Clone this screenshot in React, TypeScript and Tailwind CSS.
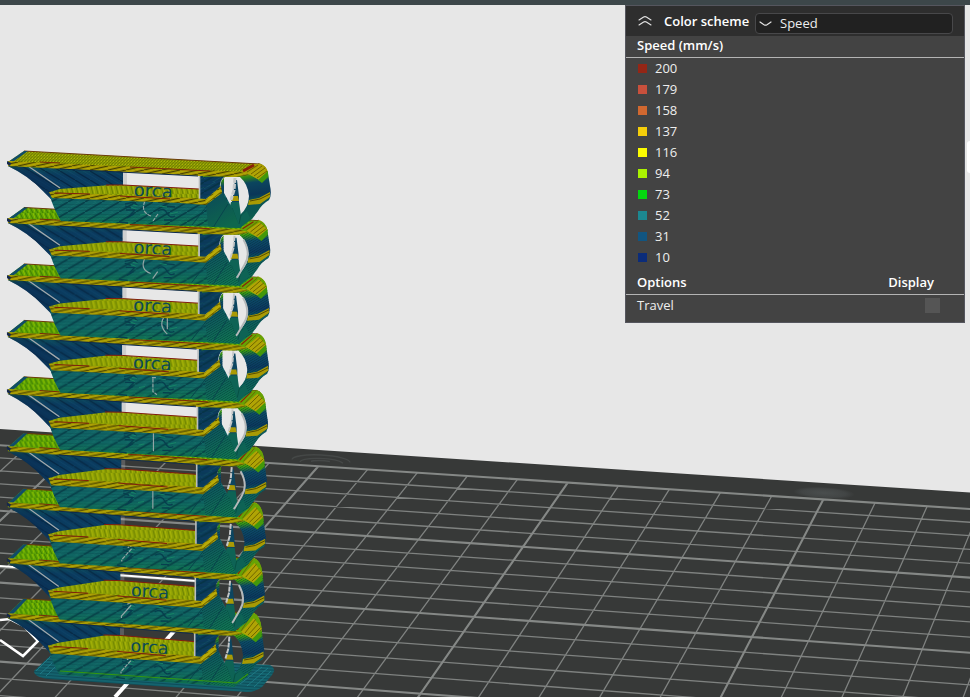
import { useState } from 'react';

interface SpeedStep {
  value: number;
  color: string;
}

interface BoatLayer {
  y: number;
  scale: number;
  lettering: boolean;
  marks: string;
  arc: boolean;
}

const speedSteps: SpeedStep[] = [
  { value: 200, color: 'bg-[#942616]' },
  { value: 179, color: 'bg-[#c8503c]' },
  { value: 158, color: 'bg-[#d16830]' },
  { value: 137, color: 'bg-[#f5ce0a]' },
  { value: 116, color: 'bg-[#fcfc00]' },
  { value: 94, color: 'bg-[#aaf200]' },
  { value: 73, color: 'bg-[#04d60f]' },
  { value: 52, color: 'bg-[#1c8891]' },
  { value: 31, color: 'bg-[#115581]' },
  { value: 10, color: 'bg-[#0b2c7a]' },
];

const hookMark = 'M145 39 Q140 50 151 54 M158 52 L153 59';
const bracketMark = 'M153 43 h5 M154 44 V57 l4 3';
const seamMark = 'M155 41 V59';
const slashMark = 'M136 39 L130 42 M134 43 L124 54 V56';

const layers: BoatLayer[] = [
  { y: 162, scale: 1, lettering: true, marks: hookMark, arc: false },
  { y: 219, scale: 0.998, lettering: true, marks: hookMark, arc: true },
  { y: 276, scale: 0.996, lettering: true, marks: 'M166 38 Q158 48 168 57 M168 36 V52', arc: true },
  { y: 333, scale: 0.993, lettering: true, marks: bracketMark, arc: false },
  { y: 390, scale: 0.99, lettering: false, marks: seamMark, arc: true },
  { y: 447, scale: 0.986, lettering: false, marks: seamMark, arc: true },
  { y: 503, scale: 0.982, lettering: false, marks: slashMark, arc: false },
  { y: 559, scale: 0.979, lettering: true, marks: slashMark, arc: true },
  { y: 614, scale: 0.976, lettering: true, marks: slashMark, arc: false },
];

// plate grid coordinates -> view coordinates, one unit = 10 cells
function project(u: number, v: number) {
  const w = 1 - 0.02338 * u - 0.08268 * v;
  const x = (485.75 * u - 131.81 * v + 318.3) / w;
  const y = (21.52 * u + 81.72 * v + 466.2) / w;
  return `${x.toFixed(1)},${y.toFixed(1)}`;
}

function gridLines(major: boolean) {
  const parts: string[] = [];
  for (let i = -10; i <= 18; i++) {
    if ((i % 5 === 0) !== major) continue;
    parts.push(`M${project(i / 10, 0)}L${project(i / 10, 2.4)}`);
  }
  for (let j = 0; j <= 24; j++) {
    if ((j % 5 === 0) !== major) continue;
    parts.push(`M${project(-1, j / 10)}L${project(1.8, j / 10)}`);
  }
  return parts.join('');
}

function Defs() {
  return (
    <defs>
      <pattern id="roofGrain" width="3" height="3" patternUnits="userSpaceOnUse">
        <rect width="3" height="3" fill="#8c9a04" />
        <path d="M0 3 L3 0" stroke="#6f7c00" strokeWidth="0.8" />
        <path d="M2 2.5 h1" stroke="#b0bb05" strokeWidth="0.8" />
      </pattern>
      <pattern id="greenGrain" width="5" height="6" patternUnits="userSpaceOnUse">
        <rect width="5" height="6" fill="#5fa603" />
        <path d="M0 0 L3 6" stroke="#3c7802" strokeWidth="1" />
        <path d="M3 0 L5 5" stroke="#91c000" strokeWidth="1" />
      </pattern>
      <pattern id="deckGrain" width="5" height="8" patternUnits="userSpaceOnUse">
        <rect width="5" height="8" fill="#8fa004" />
        <path d="M1 0 L3 8" stroke="#6c8200" strokeWidth="1" />
        <path d="M3 0 L5 8" stroke="#a9b607" strokeWidth="1" />
      </pattern>
      <pattern id="lipGrain" width="18" height="4" patternUnits="userSpaceOnUse">
        <rect width="18" height="4" fill="#9d9103" />
        <path d="M0 4 L18 0" stroke="#453f00" strokeWidth="1" />
        <path d="M0 2 L9 0 M9 4 L18 2" stroke="#beb004" strokeWidth="0.8" />
      </pattern>
      <pattern id="hullGrain" width="17" height="10" patternUnits="userSpaceOnUse">
        <path d="M-2 11.2 L19 -1.2" stroke="#032e3c" strokeOpacity="0.65" strokeWidth="1.7" />
        <path d="M-2 8 L12 -0.5 M8 10.5 L19 4" stroke="#22867a" strokeOpacity="0.3" strokeWidth="0.8" />
        <path d="M0 2.5 H17 M0 5.5 H17 M0 8.5 H17" stroke="#043b44" strokeOpacity="0.3" strokeWidth="0.8" />
      </pattern>
      <pattern id="cabinGrain" width="15" height="9" patternUnits="userSpaceOnUse">
        <path d="M0 0 L15 9" stroke="#041b33" strokeOpacity="0.6" strokeWidth="1.4" />
        <path d="M0 4 L8 9 M8 0 L15 4" stroke="#17658a" strokeOpacity="0.25" strokeWidth="0.8" />
      </pattern>
      <pattern id="fineGrain" width="2" height="2" patternUnits="userSpaceOnUse" patternTransform="rotate(-32)">
        <path d="M0 1 H2" stroke="#042c38" strokeOpacity="0.5" strokeWidth="0.8" />
      </pattern>
      <pattern id="brimGrain" width="3" height="3" patternUnits="userSpaceOnUse" patternTransform="rotate(4)">
        <rect width="3" height="3" fill="#14636e" />
        <path d="M0 1.5 H3" stroke="#0e4d59" strokeWidth="1" />
      </pattern>
      <linearGradient id="wingFill" x1="0" y1="0" x2="0" y2="1">
        <stop offset="0" stopColor="#36800f" />
        <stop offset="0.12" stopColor="#0c4a5a" />
        <stop offset="0.3" stopColor="#0a3a5e" />
        <stop offset="0.85" stopColor="#0b4062" />
        <stop offset="1" stopColor="#0e6560" />
      </linearGradient>
      <linearGradient id="hullFill" x1="0" y1="0" x2="0" y2="1">
        <stop offset="0" stopColor="#126068" />
        <stop offset="0.6" stopColor="#0f6562" />
        <stop offset="1" stopColor="#10754c" />
      </linearGradient>
      <linearGradient id="facetFill" x1="0" y1="0" x2="0.5" y2="1">
        <stop offset="0" stopColor="#0d4d63" />
        <stop offset="1" stopColor="#107552" />
      </linearGradient>
      <linearGradient id="handleFill" gradientUnits="userSpaceOnUse" x1="238" y1="4" x2="246" y2="64">
        <stop offset="0" stopColor="#aaa202" />
        <stop offset="0.13" stopColor="#b5a905" />
        <stop offset="0.2" stopColor="#3ba10b" />
        <stop offset="0.3" stopColor="#0d4c68" />
        <stop offset="0.5" stopColor="#0b3860" />
        <stop offset="0.6" stopColor="#0d5c60" />
        <stop offset="0.85" stopColor="#0d6656" />
        <stop offset="1" stopColor="#158746" />
      </linearGradient>
      <radialGradient id="plateMark">
        <stop offset="0" stopColor="#4a4e4e" />
        <stop offset="0.7" stopColor="#424545" />
        <stop offset="1" stopColor="#373938" />
      </radialGradient>
    </defs>
  );
}

function BuildPlate() {
  return (
    <g fill="none">
      <path d="M0 429 L970 492.5 V697 H0 Z" fill="#373938" />
      <ellipse cx="824" cy="493" rx="31" ry="6" fill="url(#plateMark)" transform="rotate(3 824 493)" />
      <g stroke="#454847" strokeWidth="1.4" transform="rotate(3 321 461)">
        <path d="M292 461 A29 6 0 0 1 350 461 M300 463 A22 5 0 0 1 343 462 M311 462 A12 2 0 0 1 330 461" />
      </g>
      <path d={gridLines(false)} stroke="#7f8280" strokeWidth="1.3" />
      <path d={gridLines(true)} stroke="#858886" strokeWidth="2.1" />
      <g stroke="#ffffff" strokeWidth="2.6">
        <path d="M0 566 L197 581" strokeWidth="1.8" />
        <path d="M176 629 L115 697" strokeWidth="4" />
        <path d="M0 620 L10 619 L24 626 L38 641 L23 656 L0 640" />
      </g>
    </g>
  );
}

function Face({ d, fill, grain }: { d: string; fill: string; grain?: string }) {
  return (
    <>
      <path d={d} fill={fill} />
      {grain && <path d={d} fill={grain} />}
    </>
  );
}

function Boat({ layer, index }: { layer: BoatLayer; index: number }) {
  const top = index === 0;
  // lower boats are seen from further above, so flat faces open up
  const depth = index / 8;
  const roofLeft = -11 - 5 * depth;
  const roofRight = 2 - 10 * depth;
  const deckBack = 23 - 5 * depth;
  const handle = `M222 10 H246 L259 ${roofRight - 1} Q266 ${roofRight + 1} 268 ${11 - 4 * depth} L270 24 Q272 33 269 38 Q262 42 258 49 L252 57 L240 66 L224 60 V14 Z M225 15 Q219 19 221 29 Q224 41 231 46 L240 53 Q249 45 249 34 Q248 22 240 15 Z`;

  return (
    <g transform={`matrix(${layer.scale} ${0.028 * depth} 0 1 0 ${layer.y})`}>
      {/* wing and cabin wall */}
      <Face
        d={`M8 2 L123 8 V${deckBack + 2} L60 28 L53 40 L50 36 L43 29 Q29 14 8 4 Z`}
        fill="url(#wingFill)"
        grain="url(#cabinGrain)"
      />
      <path d="M8 2 L8 4 Q29 14 43 29 L52 38 L59 29 L26 5 Z" fill="#092a50" fillOpacity="0.5" />
      <path d="M28 4 L60 26" stroke="#a4aaad" strokeWidth="1.3" />
      <path
        d={`M123 9 H127 V${deckBack + 1} H123 Z`}
        fill="#c7c9ca"
        fillOpacity={layer.y > 430 ? 0.25 : 0.8}
      />

      {/* deck */}
      <path
        d={`M50 30 L60 27 L110 ${deckBack} L123 ${deckBack} L199 ${deckBack + 4} V41 L120 37 Z`}
        fill="url(#deckGrain)"
      />
      <path
        d={`M106 ${deckBack} H123 L199 ${deckBack + 4}`}
        stroke="#821c0d"
        strokeWidth="1"
        fill="none"
      />
      {layer.lettering && (
        <text
          x="153"
          y="35"
          textAnchor="middle"
          transform="rotate(3 153 35)"
          fontFamily="DejaVu Sans, sans-serif"
          fontSize="18"
          fill="#0c4a56"
        >
          orca
        </text>
      )}

      {/* hull */}
      <Face
        d="M50 34 L130 36 L206 42 L223 29 L232 46 L240 66 L61 59 Q54 48 50 34 Z"
        fill="url(#hullFill)"
        grain="url(#hullGrain)"
      />

      {/* handle */}
      <path fillRule="evenodd" d={handle} fill="url(#handleFill)" />
      <path fillRule="evenodd" d={handle} fill="url(#fineGrain)" />
      <path d="M249 38 L259 36 L270 30 V35 L260 42 L248 43 Z" fill="#a89a04" />
      <path d="M250 39 L260 37 L270 32" stroke="#564b00" strokeWidth="1" fill="none" />

      {/* stern column seen through the handle */}
      <path d="M235 18 L233 34 L230 50 L239 58 V34 L237 18 Z" fill="#0c4560" />
      <path d="M232 34 L238 34 L239 39 L231 39 Z" fill="#aa9a05" />
      <path d="M231 40 L239 40 L241 54 L247 49 L250 56 L240 66 L226 60 Z" fill="#0e6355" />
      <path d="M241 53 L239 62 M232 46 L238 62" stroke="#075043" strokeWidth="1" />
      <path
        d="M235 16 L234 28 L231 38"
        stroke="#c4c7c8"
        strokeWidth={top ? 3 : 2}
        strokeDasharray="5 1"
        fill="none"
      />
      {layer.arc && (
        <path d="M244 20 Q252 34 245 45 L238 57 L234 60" stroke="#b5b9ba" strokeWidth="2" fill="none" />
      )}

      {/* side facet */}
      <Face
        d="M206 43 L222 28 L226 38 L233 48 L240 66 L208 64 Z"
        fill="url(#facetFill)"
        grain="url(#fineGrain)"
      />
      <path d="M207 44 L192 63 M228 42 L214 64" stroke="#08444c" strokeWidth="1" />

      {/* engraved nameplate */}
      <path
        d="M125 42 l9 -2 l4 4 m-12 4 h9 l-5 5 m28 -13 l9 1 m-4 3 l12 1 m-17 4 q6 -4 9 2 t8 3 m-41 -2 l-7 4 m-2 -12 l6 2 m33 12 h8 m-53 2 l9 1"
        stroke="#073e4e"
        strokeWidth="1.3"
        fill="none"
      />
      <path
        d="M131 45 l5 2 m4 6 l6 -1 m14 -8 l7 1 m3 7 l8 -2 m-45 -7 l5 1"
        stroke="#168565"
        strokeWidth="1"
        fill="none"
      />
      <path
        d={layer.marks}
        stroke="#93a5a5"
        strokeWidth="1.2"
        strokeDasharray={layer.arc ? undefined : '4 1'}
        fill="none"
      />

      {/* front post */}
      <Face
        d="M200 12 L225 14 Q219 19 220 26 L205 38 L200 38 Z"
        fill="#0b3a5c"
        grain="url(#hullGrain)"
      />
      <path d="M199.5 12 V37" stroke="#b9bdbf" strokeWidth="1.6" />
      <path d="M203 15 L216 14 L225 15 L236 14 V11 H203 Z" fill="#539a09" />

      {/* deck lip */}
      <path
        d={`M49 30 L90 32 L190 36 L206 37 L221 24 L222 31 L206 ${43 + depth} L180 ${41 + 2 * depth} L52 ${36 + 2 * depth} Z`}
        fill="url(#lipGrain)"
      />
      <path d="M55 31 L90 32 M120 34 L170 37" stroke="#81200c" strokeWidth="1" />
      <path d="M206 40 L221 28" stroke="#b8ab07" strokeWidth="3" />
      <path d="M206 42 L221 30" stroke="#6c6203" strokeWidth="1" />

      {/* roof */}
      <path d={`M8 0 L24 ${roofLeft} L259 ${roofRight} L246 11 Z`} fill={top ? 'url(#roofGrain)' : 'url(#greenGrain)'} />
      <path d={`M24 ${roofLeft} L259 ${roofRight}`} stroke="#6b3a08" strokeWidth="1" />
      <path d={`M8 0 L24 ${roofLeft} H28 L14 -1 Z`} fill="#104c69" />
      <path d="M8 -1 L246 10 L248 13 L236 15 L198 14 L8 4 Z" fill="url(#lipGrain)" />
      <path d="M60 7 L198 14" stroke="#0b294e" strokeWidth="1" />
      <path d="M40 0 L60 1 M130 5 L210 9" stroke="#7c2809" strokeWidth="1" />
      <path
        d={`M240 10 L252 ${roofRight} L260 ${roofRight} Q267 ${roofRight + 2} 268 ${11 - 4 * depth} L260 18 L248 12 Z`}
        fill={top ? '#a99b03' : '#67a305'}
      />
      <path d={`M247 11 L260 ${roofRight + 1 + 4 * depth} L268 ${10 - 3 * depth} L259 18 Z`} fill="#b0a405" />
      <path
        d={`M247 10 L258 ${roofRight + 1} M251 12 L262 ${4 - 6 * depth} M254 14 L265 ${6 - 4 * depth} M257 16 L267 ${9 - 3 * depth}`}
        stroke="#6f6500"
        strokeWidth="1"
      />
      <path d={`M243 9 L254 ${roofRight + 1}`} stroke="#8a2109" strokeWidth={top ? 3 : 1.2} />
      <path d="M258 18 L268 9 L268 15 L262 21 Z" fill="#43980a" />
      <path d="M7 -1 L11 1 L10 4 L7 2 Z" fill="#14284c" />
    </g>
  );
}

function Viewport() {
  return (
    <svg
      viewBox="0 5 970 692"
      preserveAspectRatio="xMinYMin slice"
      className="absolute inset-0 h-full w-full"
      fill="none"
      aria-hidden="true"
    >
      <Defs />
      <BuildPlate />
      <path d="M34 671 L51 655 L250 664 L270 665 Q277 669 272 675 L262 687 Q256 692 246 692 L48 679 Q34 677 34 671 Z" fill="url(#brimGrain)" />
      <path d="M36 671 L50 657 M40 674 L52 663 M46 676 L56 666 M240 684 L262 667 M247 686 L268 668 M254 687 L271 671" stroke="#1f7a86" strokeWidth="1" />
      {layers
        .map((layer, index) => <Boat key={layer.y} layer={layer} index={index} />)
        .reverse()}
      <path d="M60 671 L236 683 L248 674" stroke="#35970f" strokeWidth="1.2" />
    </svg>
  );
}

function LegendPanel() {
  const [collapsed, setCollapsed] = useState(false);
  const [scheme, setScheme] = useState('speed');
  const [travel, setTravel] = useState(false);

  return (
    <section className="relative w-[340px] border border-[#55565e] bg-[#434343] text-[13px] leading-[21px] text-[#eeeeee]">
      <div className="flex h-[30px] items-center bg-[#2e2e2e] pr-[11px] pl-3">
        <button
          type="button"
          aria-label="Toggle legend"
          onClick={() => setCollapsed(!collapsed)}
          className="mr-3 flex h-4 w-[14px] items-center"
        >
          <svg width="14" height="12" viewBox="0 0 14 12" fill="none" stroke="#e6e6e6" strokeWidth="1.1" strokeLinecap="round">
            <path d="M1 5 L5.6 2 Q7 1.2 8.4 2 L13 5 M1 10 L5.6 7 Q7 6.2 8.4 7 L13 10" />
          </svg>
        </button>
        <label htmlFor="scheme" className="flex-1 font-semibold whitespace-nowrap text-white">
          Color scheme
        </label>
        <div className="relative mt-1 w-[198px]">
          <select
            id="scheme"
            value={scheme}
            onChange={(e) => setScheme(e.target.value)}
            className="block h-[21px] w-full appearance-none rounded border border-[#48484a] bg-[#212121] pl-6 leading-[19px] text-[#eeeeee]"
          >
            <option value="speed">Speed</option>
            <option value="flow">Flow</option>
          </select>
          <svg className="pointer-events-none absolute top-2 left-1" width="13" height="6" viewBox="0 0 13 6" fill="none" stroke="#e6e6e6" strokeWidth="1.2" strokeLinecap="round">
            <path d="M1 1 L5 3.7 Q6.5 4.6 8 3.7 L12 1" />
          </svg>
        </div>
      </div>

      {!collapsed && (
        <>
          <h2 className="border-b border-[#b4b4b4] px-[11px] pb-[3px] font-semibold leading-[18px] text-white">
            Speed (mm/s)
          </h2>
          <ul>
            {speedSteps.map((step) => (
              <li key={step.value} className="flex items-center gap-2 px-3">
                <span className={`h-[9px] w-[9px] ${step.color}`} />
                {step.value}
              </li>
            ))}
          </ul>
          <div className="mt-1 flex justify-between border-b border-[#b4b4b4] pr-[30px] pb-px pl-[11px] font-semibold text-white">
            <span>Options</span>
            <span>Display</span>
          </div>
          <div className="flex items-center justify-between pr-6 pb-[6px] pl-[11px]">
            <label htmlFor="travel">Travel</label>
            <input
              id="travel"
              type="checkbox"
              checked={travel}
              onChange={(e) => setTravel(e.target.checked)}
              className="h-[15px] w-[15px] appearance-none bg-[#555555] checked:bg-[#009688]"
            />
          </div>
        </>
      )}
    </section>
  );
}

export default function App() {
  return (
    <div className="flex min-h-screen flex-col bg-[#e7e7e7] font-['Open_Sans',sans-serif]">
      <header className="h-[5px] bg-[#3d474a]" />
      <main className="relative flex flex-1 items-start justify-end overflow-hidden pr-[5px]">
        <Viewport />
        <LegendPanel />
        <div className="absolute top-[136px] right-0 h-8 w-[3px] rounded-l bg-white" />
      </main>
    </div>
  );
}
